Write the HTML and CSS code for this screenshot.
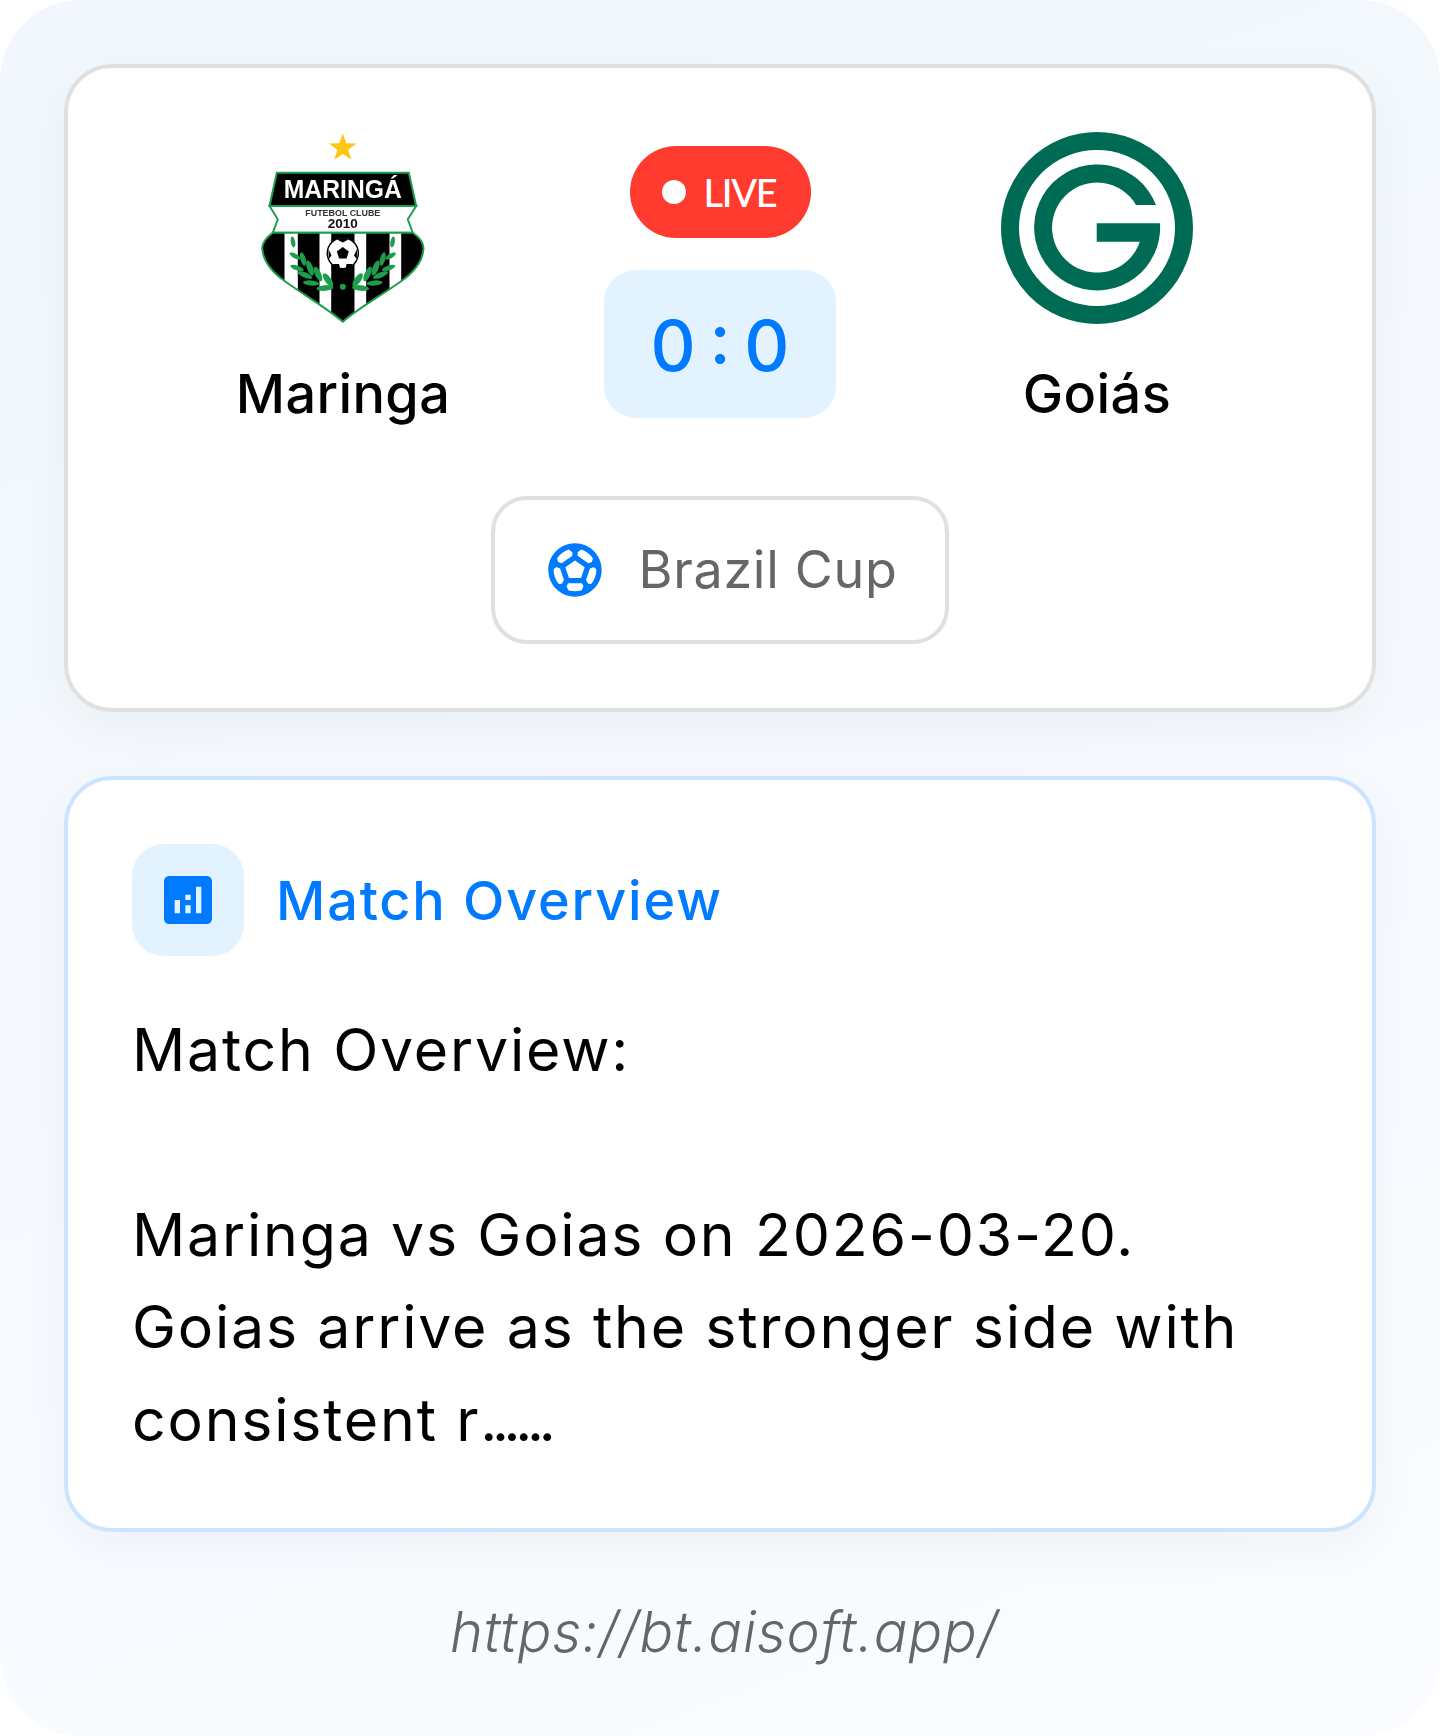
FILE: index.html
```html
<!DOCTYPE html>
<html lang="en">
<head>
  <meta charset="UTF-8">
  <meta name="viewport" content="width=device-width, initial-scale=1.0">
  <title>Maringa vs Goias</title>
  <link rel="stylesheet" href="styles.css">
</head>
<body>
  <div class="poster">
    <!-- Scoreboard -->
    <section class="card match-card">
      <div class="teams">
        <div class="team">
          <svg class="team-logo" viewBox="0 0 192 192" aria-label="Maringá crest">
            <defs>
              <clipPath id="shieldClip">
                <path d="M25.8 100.7H165.8C172 105 176.5 110 176.5 116.3C176 128 169 139 153 150C135 163 113 175 95.8 189.7C78 175 57 163 39 150C23 139 16 128 15.2 116.3C15.2 110 20 105 25.8 100.7Z"/>
              </clipPath>
            </defs>
            <polygon class="star" points="95.8,1.3 99.2,11.2 109.6,11.4 101.3,17.7 104.3,27.7 95.8,21.7 87.3,27.7 90.3,17.7 82,11.4 92.4,11.2"/>
            <path class="crest-band" d="M22.5 74L30.8 87.3L25.8 100.7H165.8L160.8 87.3L169.2 74Z"/>
            <polygon class="crest-top" points="29.8,40.7 161.8,40.7 169.2,74 22.5,74"/>
            <g clip-path="url(#shieldClip)">
              <rect x="10" y="98" width="172" height="95" fill="#000"/>
              <rect x="37.5" y="98" width="13.3" height="95" fill="#fff"/>
              <rect x="72.5" y="98" width="11.7" height="95" fill="#fff"/>
              <rect x="107.5" y="98" width="11.7" height="95" fill="#fff"/>
              <rect x="142.5" y="98" width="11.7" height="95" fill="#fff"/>
            </g>
            <path class="crest-line" d="M25.8 100.7H165.8C172 105 176.5 110 176.5 116.3C176 128 169 139 153 150C135 163 113 175 95.8 189.7C78 175 57 163 39 150C23 139 16 128 15.2 116.3C15.2 110 20 105 25.8 100.7Z"/>
            <text class="crest-name" x="95.8" y="66.3" textLength="118" lengthAdjust="spacingAndGlyphs" text-anchor="middle">MARINGÁ</text>
            <text class="crest-sub" x="95.8" y="83.7" textLength="75" lengthAdjust="spacingAndGlyphs" text-anchor="middle">FUTEBOL CLUBE</text>
            <text class="crest-year" x="95.8" y="95.7" textLength="30" lengthAdjust="spacingAndGlyphs" text-anchor="middle">2010</text>
            <!-- ball -->
            <circle cx="95.8" cy="121.3" r="15.5" fill="#fff" stroke="#000" stroke-width="1.5"/>
            <polygon points="95.8,115 101.8,119.4 99.5,126.4 92.1,126.4 89.8,119.4" fill="#000"/>
            <path d="M90 107.5L95.8 110.5L101.6 107.5L96 105.8Z" fill="#000"/>
            <path d="M81.5 117L84.5 123.5L81.8 127Z" fill="#000"/>
            <path d="M110 117L107 123.5L109.8 127Z" fill="#000"/>
            <path d="M86 132L92 132L93 136.5L88 135.5Z" fill="#000"/>
            <path d="M105.6 132L99.6 132L98.6 136.5L103.6 135.5Z" fill="#000"/>
            <!-- laurels -->
            <g class="leaves">
              <ellipse cx="46" cy="110" rx="2.2" ry="5.5" transform="rotate(-10 46 110)"/>
              <ellipse cx="48" cy="124" rx="6" ry="2.2" transform="rotate(30 48 124)"/>
              <ellipse cx="56" cy="127" rx="2.6" ry="7" transform="rotate(-15 56 127)"/>
              <ellipse cx="50" cy="136" rx="7" ry="2.4" transform="rotate(20 50 136)"/>
              <ellipse cx="63" cy="136" rx="3" ry="8" transform="rotate(-20 63 136)"/>
              <ellipse cx="58" cy="143" rx="8" ry="2.6" transform="rotate(22 58 143)"/>
              <ellipse cx="71" cy="142" rx="3" ry="8" transform="rotate(-25 71 142)"/>
              <ellipse cx="64" cy="151" rx="8" ry="2.6" transform="rotate(5 64 151)"/>
              <ellipse cx="81" cy="148" rx="3.2" ry="8" transform="rotate(-35 81 148)"/>
              <ellipse cx="78" cy="156" rx="8.5" ry="2.8" transform="rotate(-5 78 156)"/>
              <ellipse cx="145.6" cy="110" rx="2.2" ry="5.5" transform="rotate(10 145.6 110)"/>
              <ellipse cx="143.6" cy="124" rx="6" ry="2.2" transform="rotate(-30 143.6 124)"/>
              <ellipse cx="135.6" cy="127" rx="2.6" ry="7" transform="rotate(15 135.6 127)"/>
              <ellipse cx="141.6" cy="136" rx="7" ry="2.4" transform="rotate(-20 141.6 136)"/>
              <ellipse cx="128.6" cy="136" rx="3" ry="8" transform="rotate(20 128.6 136)"/>
              <ellipse cx="133.6" cy="143" rx="8" ry="2.6" transform="rotate(-22 133.6 143)"/>
              <ellipse cx="120.6" cy="142" rx="3" ry="8" transform="rotate(25 120.6 142)"/>
              <ellipse cx="127.6" cy="151" rx="8" ry="2.6" transform="rotate(-5 127.6 151)"/>
              <ellipse cx="110.6" cy="148" rx="3.2" ry="8" transform="rotate(35 110.6 148)"/>
              <ellipse cx="113.6" cy="156" rx="8.5" ry="2.8" transform="rotate(5 113.6 156)"/>
              <circle cx="95.8" cy="154.7" r="3"/>
            </g>
          </svg>
          <div class="team-name">Maringa</div>
        </div>

        <div class="match-status">
          <div class="live-pill"><span class="live-dot"></span>LIVE</div>
          <div class="score">0 : 0</div>
        </div>

        <div class="team">
          <svg class="team-logo" viewBox="0 0 192 192" aria-label="Goiás crest">
            <circle cx="96" cy="96" r="87" fill="none" stroke="#006b54" stroke-width="18"/>
            <path fill="#006b54" d="M155 73A63 63 0 1 0 159 91.3H95.7V109.7H138.8A45 45 0 1 1 135 73Z"/>
          </svg>
          <div class="team-name">Goiás</div>
        </div>
      </div>

      <div class="league-row">
        <div class="league-chip">
          <svg class="league-icon" viewBox="0 0 24 24"><path d="M12 2C6.48 2 2 6.48 2 12s4.48 10 10 10 10-4.48 10-10S17.52 2 12 2zm1 3.3 1.35-.95c1.82.56 3.37 1.76 4.38 3.34l-.39 1.34-1.35.46L13 6.7V5.3zm-3.35-.95L11 5.3v1.4L7.01 9.49l-1.35-.46-.39-1.34c1.01-1.57 2.56-2.77 4.38-3.34zM7.08 17.11l-1.14.1C4.73 15.81 4 13.99 4 12c0-.12.01-.23.02-.35l1-.73 1.38.48 1.46 4.34-.78 1.37zm7.42 2.48c-.79.26-1.63.41-2.5.41s-1.71-.15-2.5-.41l-.69-1.49.64-1.1h5.11l.64 1.11-.7 1.48zM14.27 15H9.73l-1.35-4.02L12 8.44l3.63 2.54L14.27 15zm3.79 2.21-1.14-.1-.79-1.37 1.46-4.34 1.39-.47 1 .73c.01.11.02.22.02.34 0 1.99-.73 3.81-1.94 5.21z"/></svg>
          <span class="league-name">Brazil Cup</span>
        </div>
      </div>
    </section>

    <!-- Overview -->
    <section class="card overview-card">
      <div class="overview-head">
        <div class="overview-icon">
          <svg viewBox="0 0 24 24"><path d="M19 3H5c-1.1 0-2 .9-2 2v14c0 1.1.9 2 2 2h14c1.1 0 2-.9 2-2V5c0-1.1-.9-2-2-2zM9 17H7v-5h2v5zm4 0h-2v-3h2v3zm0-5h-2v-2h2v2zm4 5h-2V7h2v10z"/></svg>
        </div>
        <h2 class="overview-title">Match Overview</h2>
      </div>
      <p class="overview-text">Match Overview:<br><br>Maringa vs Goias on 2026-03-20.<br>Goias arrive as the stronger side with<br>consistent r<span class="ellipsis">......</span></p>
    </section>

    <div class="site-link">https://bt.aisoft.app/</div>
  </div>
</body>
</html>
```

FILE: styles.css
```css
* {
  box-sizing: border-box;
}
body {
  margin: 0;
  background-color: #fff;
  font-family: Inter, "Noto Sans", sans-serif;
}
.poster {
  height: 1736px;
  padding: 64px 64px 0;
  border-radius: 80px;
  background: linear-gradient(160deg, #f1f7fd 0%, #fafcff 100%);
}
.card {
  background-color: #fff;
  border: 4px solid #e0e0e0;
  border-radius: 48px;
  padding: 64px;
  box-shadow: 0 16px 48px rgba(0, 0, 0, 0.04);
}
.overview-card {
  margin-top: 64px;
  height: 756px;
  border-color: #cce5ff;
}
.teams {
  display: grid;
  grid-template-columns: 1fr auto 1fr;
  column-gap: 50px;
  align-items: center;
}
.team {
  display: flex;
  flex-direction: column;
  align-items: center;
}
.team-logo {
  width: 192px;
  height: 192px;
  display: block;
  filter: blur(0.5px);
}
.team-name {
  margin-top: 31px;
  font-size: 54px;
  font-weight: 550;
  letter-spacing: 0.4px;
  line-height: 77px;
  color: #000;
}
.match-status {
  display: flex;
  flex-direction: column;
  align-items: center;
  gap: 32px;
}
.live-pill {
  display: flex;
  align-items: center;
  gap: 18px;
  height: 92px;
  padding: 0 34px 0 32px;
  border-radius: 46px;
  background-color: #ff3b30;
  color: #fff;
  font-family: Lato, sans-serif;
  font-size: 38px;
  font-weight: 500;
  letter-spacing: -1.3px;
}
.live-dot {
  width: 24px;
  height: 24px;
  border-radius: 50%;
  background-color: #fff;
}
.score {
  width: 232px;
  height: 148px;
  border-radius: 32px;
  background-color: #e3f2ff;
  color: #007aff;
  font-size: 70px;
  font-weight: 500;
  word-spacing: -5px;
  line-height: 152px;
  text-align: center;
}
.league-row {
  display: flex;
  justify-content: center;
  margin-top: 64px;
}
.league-chip {
  display: flex;
  align-items: center;
  gap: 32px;
  height: 148px;
  padding: 0 48px;
  border: 4px solid #e0e0e0;
  border-radius: 36px;
}
.league-icon {
  width: 64px;
  height: 64px;
  fill: #007aff;
}
.league-name {
  font-size: 52px;
  letter-spacing: 0.7px;
  line-height: 80px;
  color: #666;
}
.overview-head {
  display: flex;
  align-items: center;
  gap: 32px;
}
.overview-icon {
  display: flex;
  width: 112px;
  height: 112px;
  padding: 24px;
  border-radius: 32px;
  background-color: #e3f2ff;
}
.overview-icon svg {
  width: 64px;
  height: 64px;
  fill: #007aff;
}
.overview-title {
  margin: 0;
  font-size: 54px;
  font-weight: 500;
  letter-spacing: 1.85px;
  color: #007aff;
}
.overview-text {
  margin: 48px 0 0;
  font-size: 59px;
  letter-spacing: 1.8px;
  line-height: 92.4px;
  color: #000;
}
.ellipsis {
  letter-spacing: -5.3px;
}
.site-link {
  margin-top: 66px;
  padding-left: 8px;
  text-align: center;
  font-size: 56px;
  font-style: italic;
  font-weight: 300;
  letter-spacing: 0.85px;
  color: #666;
}
.star {
  fill: #fdc614;
}
.crest-top {
  fill: #000;
  stroke: #1e9e4c;
  stroke-width: 2;
}
.crest-band {
  fill: #fff;
  stroke: #1e9e4c;
  stroke-width: 2;
}
.crest-line {
  fill: none;
  stroke: #1e9e4c;
  stroke-width: 2;
}
.crest-name {
  font-family: "Liberation Sans", sans-serif;
  font-size: 25px;
  font-weight: 700;
  fill: #fff;
}
.crest-sub {
  font-family: "Liberation Sans", sans-serif;
  font-size: 8.5px;
  font-weight: 700;
  fill: #333;
}
.crest-year {
  font-family: "Liberation Sans", sans-serif;
  font-size: 12px;
  font-weight: 700;
  fill: #111;
}
.leaves {
  fill: #1e9e4c;
}
```
